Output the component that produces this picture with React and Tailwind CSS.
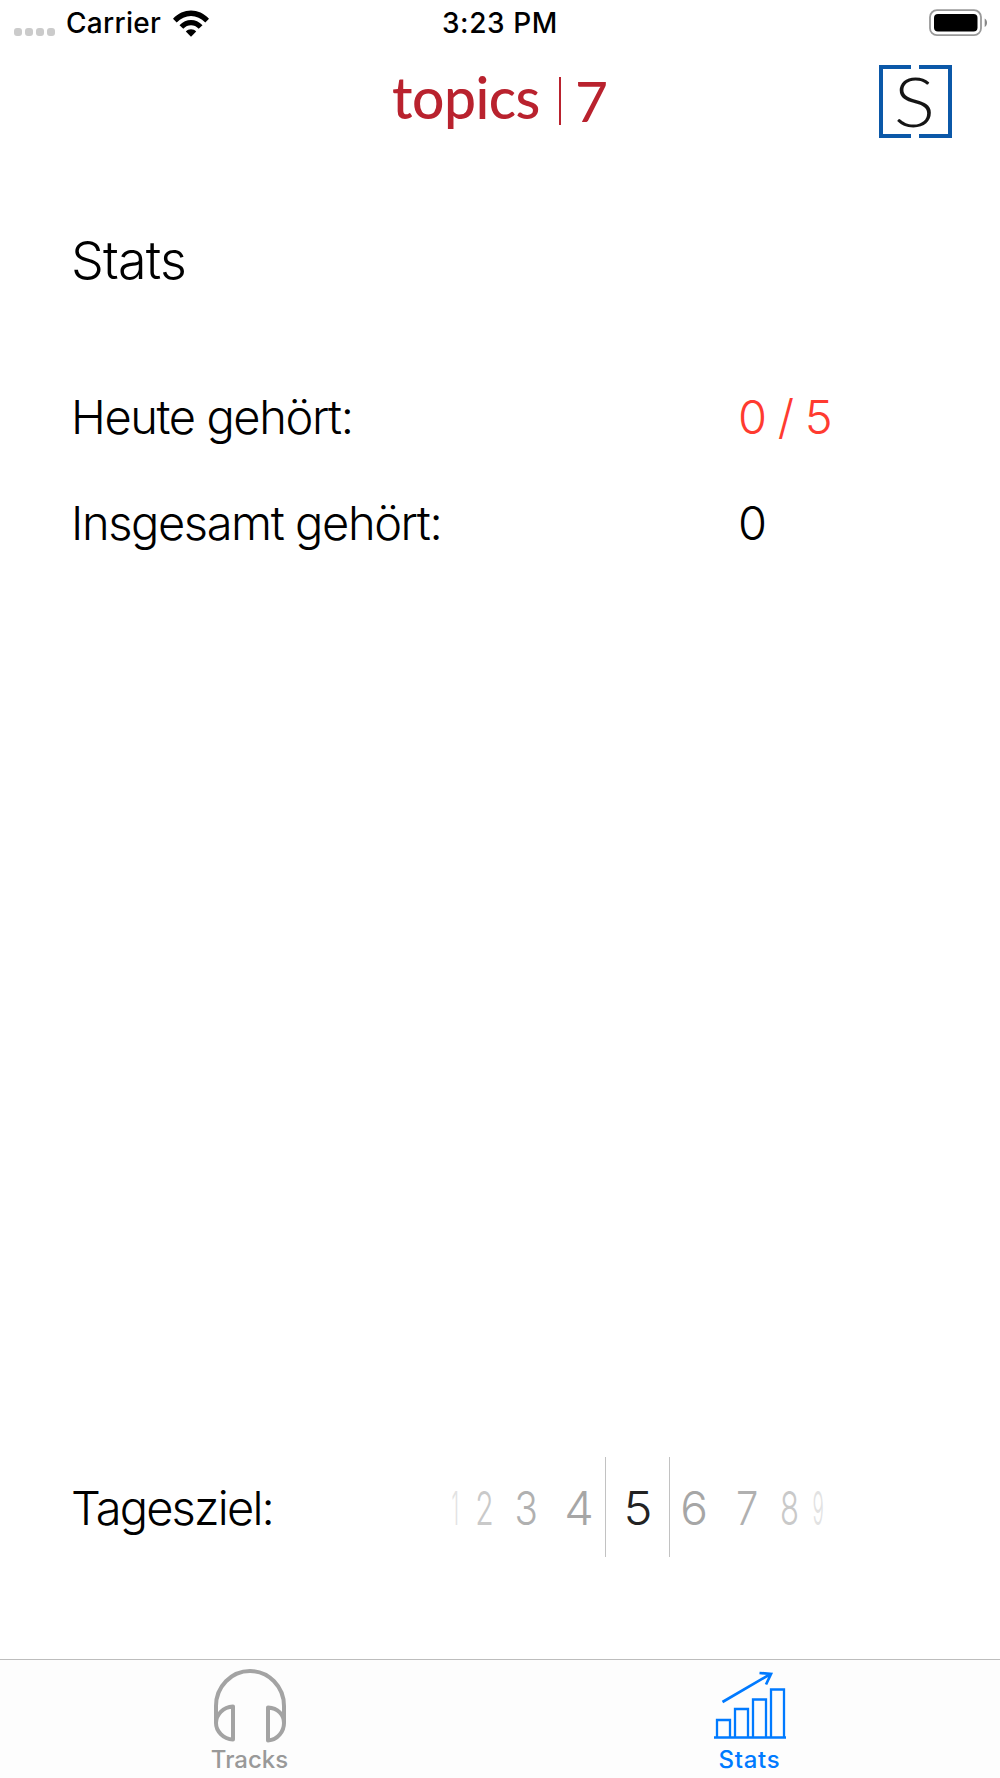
import React from "react";

const digits = [
  { n: "1", cell: "w-[26px] text-[#e2e2e2]", glyph: "scale-x-[.4]" },
  { n: "2", cell: "w-[33px] text-[#c9c9c9]", glyph: "scale-x-[.64]" },
  { n: "3", cell: "w-[52px] pr-px text-[#b0b0b0]", glyph: "scale-x-[.82]" },
  { n: "4", cell: "w-[52px] text-[#a6a6a6]", glyph: "scale-x-100" },
  { n: "5", cell: "w-[65px] border-x border-[#c2c2c2] text-[#222222]", glyph: "scale-x-[1.04]" },
  { n: "6", cell: "w-[50px] pr-[2px] text-[#a6a6a6]", glyph: "scale-x-[.98]" },
  { n: "7", cell: "w-[56px] pr-px text-[#b0b0b0]", glyph: "scale-x-[.85]" },
  { n: "8", cell: "w-[27px] text-[#c9c9c9]", glyph: "scale-x-[.66]" },
  { n: "9", cell: "w-[30px] text-[#e2e2e2]", glyph: "scale-x-[.4]" },
];

function StatusBar() {
  return (
    <header className="grid h-[47px] grid-cols-3 items-center text-[28px] leading-[47px] font-medium text-black">
      <div className="flex items-center pl-[14px]">
        <div className="flex gap-[3px] pt-[17px]">
          <i className="size-[8px] rounded-[3px] bg-[#cbcbcb]" />
          <i className="size-[8px] rounded-[3px] bg-[#cbcbcb]" />
          <i className="size-[8px] rounded-[3px] bg-[#cbcbcb]" />
          <i className="size-[8px] rounded-[3px] bg-[#cbcbcb]" />
        </div>
        <span className="ml-[11px] w-[107px] tracking-[0.3px] whitespace-nowrap">Carrier</span>
        <svg className="-mt-px h-[27px] w-[36px]" viewBox="0 0 36 27">
          <path d="M0 8.8C10-2.3 26-2.3 36 8.8L32.3 12.5C24.3 3.8 11.7 3.8 3.7 12.5Z" />
          <path d="M6.5 15.2C13 8.1 23 8.1 29.5 15.2L25.7 18.8C21.3 14.2 14.7 14.2 10.3 18.8Z" />
          <path d="M12.8 21.4C15.5 18.6 20.5 18.6 23.2 21.4L18 26.7Z" />
        </svg>
      </div>
      <time className="text-center tracking-[0.6px] whitespace-nowrap">3:23 PM</time>
      <div className="flex justify-end pr-[12px]">
        <svg className="-mt-px h-[28px] w-[60px]" viewBox="0 0 60 28">
          <rect x="2" y="1.2" width="51" height="25" rx="7" fill="none" stroke="#999" strokeWidth="1.8" />
          <rect x="6" y="5" width="43.5" height="17.5" rx="4" fill="#000" />
          <path d="M56.7 9.5C59.8 11 59.8 16.5 56.7 18Z" fill="#888" />
        </svg>
      </div>
    </header>
  );
}

function Brand() {
  return (
    <div className="grid h-[108px] grid-cols-[1fr_216px_1fr] items-start font-['Lato',sans-serif]">
      <div />
      <div className="flex pt-[30px] text-[#b9222e]">
        <span className="-mt-[4px] w-[168px] text-[57px] leading-[48px] font-medium tracking-[-0.5px] whitespace-nowrap">topics</span>
        <span className="h-[48px] w-[2px] bg-[#b9222e]" />
        <span className="-mt-px pl-[14px] text-[57px] leading-[48px]">7</span>
      </div>
      <div className="flex justify-end pt-[18px] pr-[48px]">
        <div className="relative size-[73px] border-[4px] border-[#0b58a8] text-center text-[69px] leading-[64px] font-light text-[#151515]">
          <i className="absolute -top-[4px] left-[28px] h-[4px] w-[8px] bg-white" />
          <i className="absolute -bottom-[4px] left-[28px] h-[4px] w-[8px] bg-white" />
          <span className="mr-[3px] inline-block scale-x-[1.12]">S</span>
        </div>
      </div>
    </div>
  );
}

function Row({ label, value, valueClass }) {
  return (
    <div className="flex h-[106px] items-center">
      <dt className="w-[666px] tracking-[-1.4px]">{label}</dt>
      <dd className={valueClass}>{value}</dd>
    </div>
  );
}

function TabBar() {
  return (
    <nav className="grid h-[119px] grid-cols-2 border-t border-[#bdbdbd] bg-[#fdfdfd] text-[24px] leading-[28px] font-medium">
      <a className="flex flex-col items-center pt-[9px] pr-px text-[#999]">
        <svg className="h-[77px] w-[76px]" viewBox="0 0 76 77" fill="none" stroke="#a3a3a3" strokeWidth="4">
          <path d="M4 54V37A34 35 0 0 1 72 37V54" />
          <path d="M21 37.500C11 38 4 46 4 54S11 70 21 70.500Z" strokeLinejoin="round" />
          <path d="M56 38.500C66 39 72 46 72 54S66 71 56 71.500Z" strokeLinejoin="round" />
        </svg>
        <span>Tracks</span>
      </a>
      <a className="flex flex-col items-center pt-[9px] pr-px text-[#007aff]">
        <svg className="h-[77px] w-[76px]" viewBox="0 0 76 77" fill="none" stroke="currentColor" strokeWidth="2.300">
          <path d="M2 68.500H74M5 68V51H18V68M23 68V40H36V68M41 68V30.500H54V68M59 68V20.500H72V68" />
          <path d="M10.500 33L58.500 5M47.500 4L59 5L54 15.500" strokeWidth="2.700" />
        </svg>
        <span className="tracking-[0.7px]">Stats</span>
      </a>
    </nav>
  );
}

export default function App() {
  return (
    <div className="flex h-[1778px] w-[1000px] flex-col overflow-hidden bg-white font-['Inter',sans-serif] text-black">
      <StatusBar />
      <Brand />
      <main className="flex flex-1 flex-col pl-[71px] text-[47px] leading-[60px] font-light">
        <h1 className="mt-[76px] text-[52px] leading-[60px] font-light tracking-[-0.8px]">Stats</h1>
        <dl className="mt-[73px]">
          <Row label="Heute gehört:" value="0 / 5" valueClass="pl-px text-[#ff3b30] tracking-[-0.5px] [word-spacing:-1.5px]" />
          <Row label="Insgesamt gehört:" value="0" valueClass="pl-px" />
        </dl>
        <section className="mt-auto mb-[102px] flex h-[100px] items-center">
          <h2 className="w-[371px] pt-px tracking-[-1.8px]">Tagesziel:</h2>
          <div className="flex h-[100px] items-center">
            {digits.map((d) => (
              <div
                key={d.n}
                className={`flex h-full shrink-0 items-center justify-center pt-[2px] ${d.cell}`}
              >
                <span className={`inline-block ${d.glyph}`}>{d.n}</span>
              </div>
            ))}
          </div>
        </section>
      </main>
      <TabBar />
    </div>
  );
}
